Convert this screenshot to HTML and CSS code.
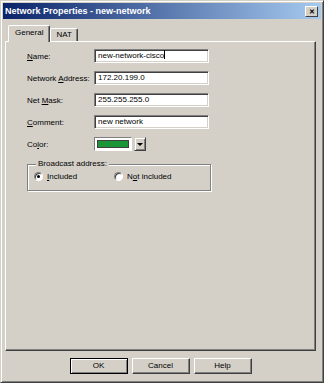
FILE: index.html
```html
<!DOCTYPE html>
<html lang="en">
<head>
    <meta charset="UTF-8">
    <title>Network Properties - new-network</title>
    <link rel="stylesheet" href="styles.css">
</head>
<body>

    <div class="window">
        <div class="titlebar">
            <span class="title">Network Properties - new-network</span>
            <span class="close">&#x2715;</span>
        </div>

        <div class="content">
            <div class="tabs">
                <div class="tab active">General</div>
                <div class="tab">NAT</div>
            </div>

            <div class="panel">
                <div class="form">
                    <label class="label"><u>N</u>ame:</label>
                    <div class="field">new-network-cisco<span class="caret"></span></div>

                    <label class="label">Network <u>A</u>ddress:</label>
                    <div class="field">172.20.199.0</div>

                    <label class="label">Net <u>M</u>ask:</label>
                    <div class="field">255.255.255.0</div>

                    <label class="label"><u>C</u>omment:</label>
                    <div class="field">new network</div>

                    <label class="label">Co<u>l</u>or:</label>
                    <div class="color-row">
                        <div class="swatch"><div class="swatch-fill"></div></div>
                        <div class="drop"><span class="arrow"></span></div>
                    </div>
                </div>

                <fieldset class="group">
                    <legend>Broadcast address:</legend>
                    <div class="radios">
                        <div class="radio-item"><span class="radio checked"></span><span><u>I</u>ncluded</span></div>
                        <div class="radio-item"><span class="radio"></span><span>N<u>o</u>t included</span></div>
                    </div>
                </fieldset>
            </div>

            <div class="actions">
                <div class="btn default">OK</div>
                <div class="btn">Cancel</div>
                <div class="btn">Help</div>
            </div>
        </div>
    </div>

</body>
</html>
```

FILE: styles.css
```css
body {
    margin: 0;
    font-family: "Liberation Sans", Arial, sans-serif;
    font-size: 8px;
    color: #000;
    background: #d4d0c8;
}
.window {
    width: 324px;
    height: 383px;
    box-sizing: border-box;
    background: #d4d0c8;
    border-top: 1px solid #d4d0c8;
    border-left: 1px solid #d4d0c8;
    border-right: 1px solid #404040;
    border-bottom: 1px solid #404040;
    box-shadow: inset 1px 1px 0 #fff, inset -1px -1px 0 #808080;
    padding: 2px;
}
.titlebar {
    height: 16px;
    display: flex;
    align-items: center;
    justify-content: space-between;
    padding: 0 3px 0 2px;
    background: linear-gradient(to right, #0a246a, #a6caf0);
}
.title {
    color: #fff;
    font-weight: bold;
    font-size: 9px;
}
.close {
    width: 13px;
    height: 11px;
    box-sizing: border-box;
    background: #d4d0c8;
    border-top: 1px solid #fff;
    border-left: 1px solid #fff;
    border-right: 1px solid #404040;
    border-bottom: 1px solid #404040;
    font-size: 7px;
    font-weight: bold;
    line-height: 9px;
    text-align: center;
}
.content {
    padding: 6px 0 0 2px;
}
.tabs {
    display: flex;
    align-items: flex-end;
    margin-left: 3px;
    height: 16px;
    position: relative;
    z-index: 1;
}
.tab {
    height: 12px;
    padding: 0 5px;
    line-height: 12px;
    border-top: 1px solid #fff;
    border-left: 1px solid #fff;
    border-right: 1px solid #404040;
    border-radius: 2px 2px 0 0;
    box-shadow: inset -1px 0 0 #808080;
}
.tab.active {
    height: 16px;
    line-height: 14px;
    padding: 0 6px;
    margin-bottom: -1px;
    background: #d4d0c8;
}
.panel {
    width: 311px;
    height: 310px;
    box-sizing: border-box;
    border-top: 1px solid #fff;
    border-left: 1px solid #fff;
    border-right: 1px solid #404040;
    border-bottom: 1px solid #404040;
    box-shadow: inset -1px -1px 0 #808080;
    padding: 7px 0 0 21px;
}
.form {
    display: grid;
    grid-template-columns: 67px 115px;
    grid-auto-rows: 14px;
    row-gap: 8px;
    align-items: center;
}
.label {
    white-space: nowrap;
}
.field {
    height: 14px;
    box-sizing: border-box;
    background: #fff;
    border-top: 1px solid #808080;
    border-left: 1px solid #808080;
    border-right: 1px solid #fff;
    border-bottom: 1px solid #fff;
    box-shadow: inset 1px 1px 0 #404040, inset -1px -1px 0 #d4d0c8;
    padding: 0 3px;
    line-height: 12px;
    white-space: nowrap;
}
.caret {
    display: inline-block;
    width: 1px;
    height: 9px;
    background: #000;
    vertical-align: -1px;
}
.color-row {
    display: flex;
    gap: 2px;
    height: 14px;
}
.swatch {
    width: 38px;
    height: 14px;
    box-sizing: border-box;
    background: #fff;
    border-top: 1px solid #808080;
    border-left: 1px solid #808080;
    border-right: 1px solid #fff;
    border-bottom: 1px solid #fff;
    padding: 2px;
}
.swatch-fill {
    height: 100%;
    background: #1a9638;
    box-shadow: inset 0 0 0 1px #404040;
}
.drop {
    width: 12px;
    height: 14px;
    box-sizing: border-box;
    border-top: 1px solid #d4d0c8;
    border-left: 1px solid #d4d0c8;
    border-right: 1px solid #404040;
    border-bottom: 1px solid #404040;
    box-shadow: inset 1px 1px 0 #fff, inset -1px -1px 0 #808080;
    display: flex;
    align-items: center;
    justify-content: center;
}
.arrow {
    width: 0;
    height: 0;
    border-left: 3px solid transparent;
    border-right: 3px solid transparent;
    border-top: 3px solid #000;
}
.group {
    width: 184px;
    height: 32px;
    box-sizing: border-box;
    margin: 8px 0 0 0;
    padding: 3px 0 0 6px;
    border: 1px solid #808080;
    box-shadow: inset 1px 1px 0 #fff, 1px 1px 0 #fff;
}
.group legend {
    padding: 0 2px;
    margin-left: 2px;
    line-height: 10px;
    background: #d4d0c8;
}
.radios {
    display: flex;
}
.radio-item {
    display: flex;
    align-items: center;
    gap: 4px;
    flex: none;
    width: 80px;
    white-space: nowrap;
}
.radio {
    flex: none;
    width: 9px;
    height: 9px;
    box-sizing: border-box;
    border-radius: 50%;
    background: #fff;
    border: 1px solid;
    border-color: #808080 #fff #fff #808080;
    box-shadow: inset 1px 1px 0 #404040;
    display: flex;
    align-items: center;
    justify-content: center;
}
.radio.checked::after {
    content: "";
    width: 3px;
    height: 3px;
    border-radius: 50%;
    background: #000;
}
.actions {
    width: 311px;
    display: flex;
    justify-content: center;
    gap: 4px;
    margin-top: 7px;
}
.btn {
    width: 58px;
    height: 16px;
    box-sizing: border-box;
    border-top: 1px solid #fff;
    border-left: 1px solid #fff;
    border-right: 1px solid #404040;
    border-bottom: 1px solid #404040;
    box-shadow: inset -1px -1px 0 #808080;
    text-align: center;
    line-height: 14px;
}
.btn.default {
    border: 1px solid #000;
    box-shadow: inset 1px 1px 0 #fff, inset -1px -1px 0 #808080;
}
```
